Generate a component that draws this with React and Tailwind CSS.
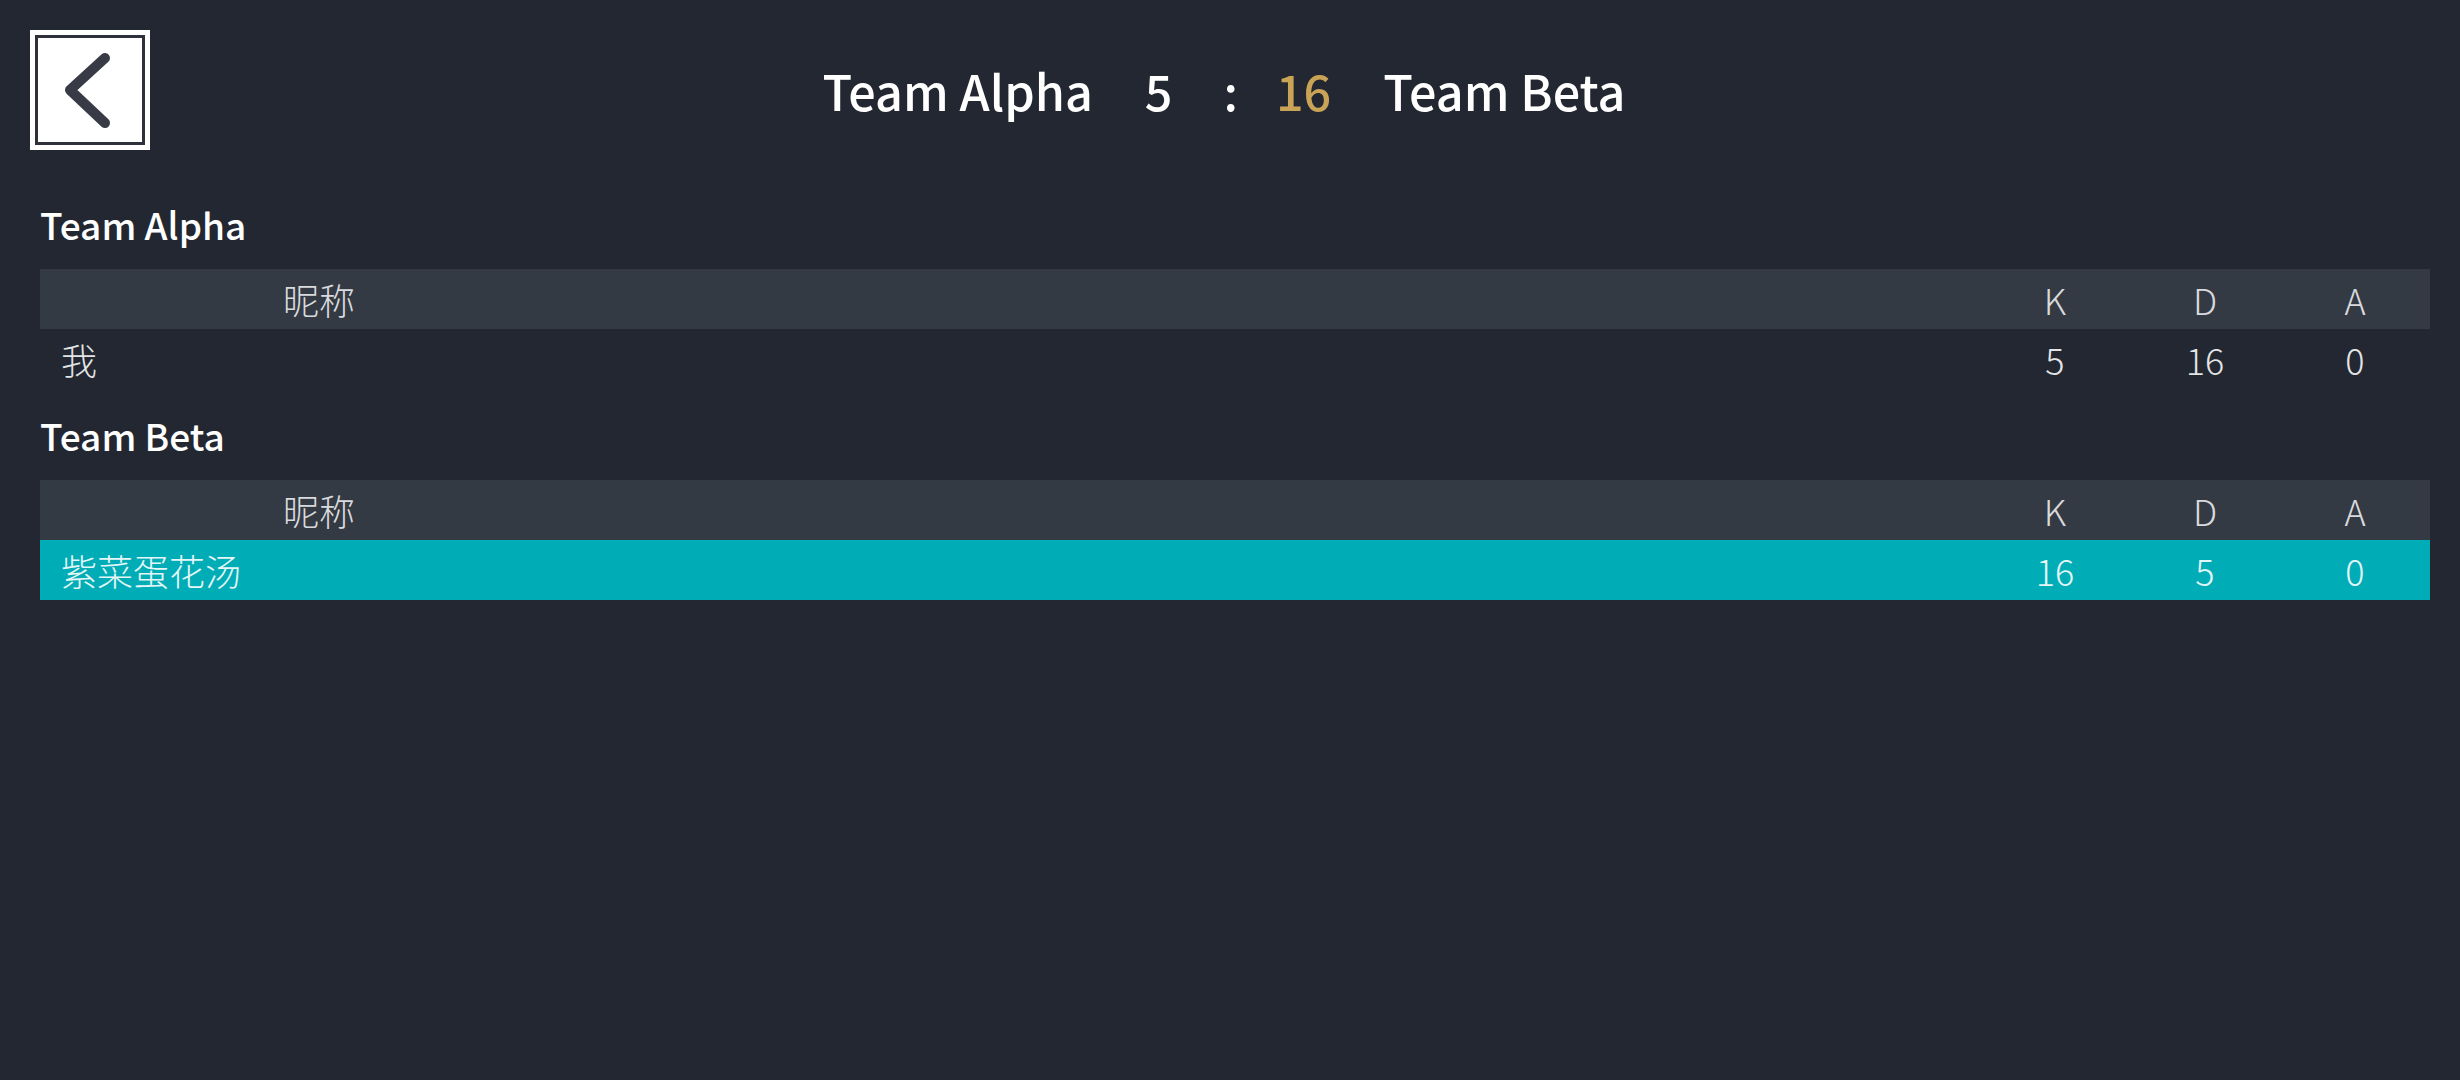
import { Fragment } from "react";

const teams = [
  {
    name: "Team Alpha",
    players: [{ id: 1, nickname: "我", kills: 5, deaths: 16, assists: 0, highlight: false }],
  },
  {
    name: "Team Beta",
    players: [{ id: 2, nickname: "紫菜蛋花汤", kills: 16, deaths: 5, assists: 0, highlight: true }],
  },
];

function BackButton() {
  return (
    <button type="button" className="relative h-[120px] w-[120px] bg-white">
      <span className="absolute inset-[5px] border-[3px] border-[#2e313b]" />
      <svg className="absolute inset-0" width="120" height="120" viewBox="0 0 120 120" fill="none">
        <path d="M75 28 L40 60 L75 93" stroke="#383b45" strokeWidth="10" strokeLinecap="round" strokeLinejoin="round" />
      </svg>
    </button>
  );
}

function ScoreTable({ team }) {
  return (
    <section>
      <h2 className="h-[91px] pt-[28px] text-[37px] leading-[37px] font-medium text-white">{team.name}</h2>
      <div className="text-[36px] leading-none font-light">
        <div className="flex h-[60px] items-center bg-[#343a44] text-[#d9dadd]">
          <div className="w-[558px] text-center">昵称</div>
          <div className="flex-1" />
          <div className="w-[150px] text-center">K</div>
          <div className="w-[150px] text-center">D</div>
          <div className="w-[150px] text-center">A</div>
        </div>
        {team.players.map((player) => (
          <div
            key={player.id}
            className={
              player.highlight
                ? "flex h-[60px] items-center bg-[#00adb6] text-[#e4f6f7]"
                : "flex h-[60px] items-center text-[#e3e4e6]"
            }
          >
            <div className="flex-1 pl-[21px]">{player.nickname}</div>
            <div className="w-[150px] text-center">{player.kills}</div>
            <div className="w-[150px] text-center">{player.deaths}</div>
            <div className="w-[150px] text-center">{player.assists}</div>
          </div>
        ))}
      </div>
    </section>
  );
}

export default function App() {
  return (
    <div className="min-h-screen w-full bg-[#222731] font-['Noto_Sans_CJK_SC','Noto_Sans',sans-serif]">
      <header className="grid h-[150px] grid-cols-[1fr_auto_1fr] items-center px-[30px] pt-[30px]">
        <div className="flex h-[120px] items-center">
          <BackButton />
        </div>
        <div className="flex items-center pr-[12px] text-[48.5px] leading-none font-medium text-white">
          <span>Team Alpha</span>
          <span className="ml-[52px]">5</span>
          <span className="ml-[51px]">:</span>
          <span className="ml-[38px] text-[#c9a456]">16</span>
          <span className="ml-[52px]">Team Beta</span>
        </div>
        <div />
      </header>
      <main className="pt-[28px] pl-[40px] pr-[30px]">
        {teams.map((team) => (
          <Fragment key={team.name}>
            <ScoreTable team={team} />
          </Fragment>
        ))}
      </main>
    </div>
  );
}
